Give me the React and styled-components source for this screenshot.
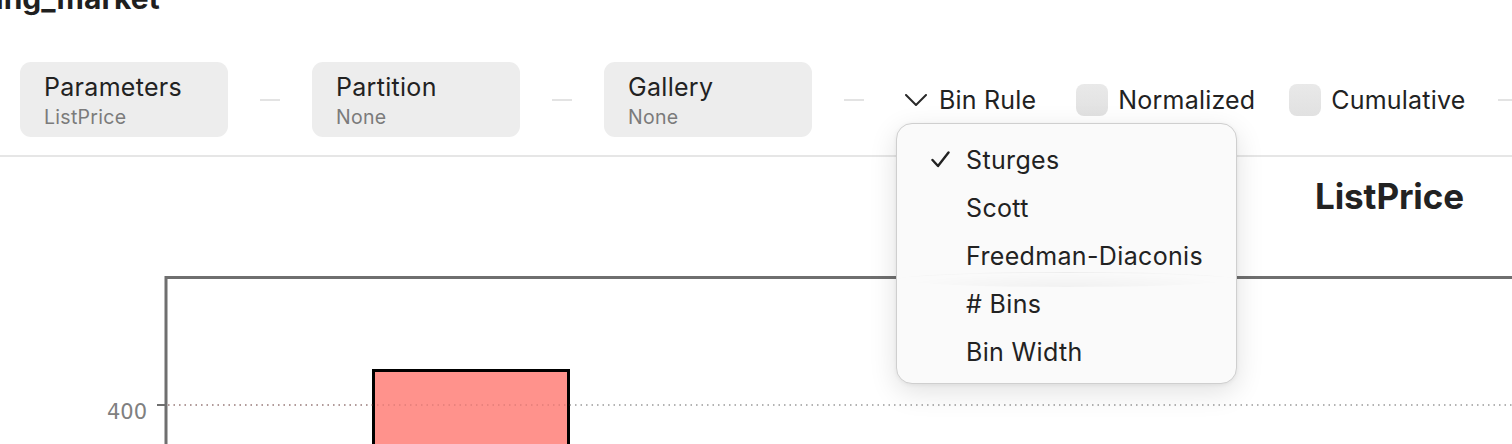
import React from "react";
import styled, { createGlobalStyle } from "styled-components";

const Global = createGlobalStyle`
  html, body { margin: 0; padding: 0; background: #fff; }
  body { font-family: Inter, "Noto Sans", sans-serif; color: #222; overflow: hidden; width: 1512px; height: 444px; }
  * { box-sizing: border-box; }
`;

const Page = styled.div`
  width: 1512px;
  height: 444px;
  overflow: hidden;
  display: flex;
  flex-direction: column;
`;

const TitleBar = styled.div`
  height: 51px;
  overflow: hidden;
  flex: none;
`;

const Title = styled.h1`
  margin: -17px 0 0 -77px;
  font-size: 30px;
  line-height: 30px;
  font-weight: 700;
  color: #1f1f1f;
  white-space: nowrap;
`;

const Toolbar = styled.div`
  display: flex;
  align-items: center;
  gap: 32px;
  padding: 11px 0 18px 20px;
  border-bottom: 2px solid #e6e6e6;
  white-space: nowrap;
  flex: none;
`;

const Pill = styled.div`
  width: 208px;
  height: 75px;
  flex: none;
  border-radius: 11px;
  background: #ededed;
  padding: 11px 24px 0;
  display: flex;
  flex-direction: column;
  gap: 4px;
`;

const PillTitle = styled.div`
  font-size: 25px;
  line-height: 28px;
  letter-spacing: 0.3px;
  color: #222;
`;

const PillValue = styled.div`
  font-size: 19.5px;
  line-height: 24px;
  letter-spacing: 0.3px;
  color: #7b7b7b;
`;

const Dash = styled.div`
  width: 20px;
  height: 2px;
  background: #e3e3e3;
  flex: none;
`;

const Control = styled.div`
  display: flex;
  align-items: center;
  gap: ${(p) => p.$gap || 10}px;
  margin-left: ${(p) => p.$ml || 0}px;
  font-size: 25px;
  line-height: 30px;
  letter-spacing: 0.2px;
  color: #222;
`;

const Dropdown = styled.div`
  position: relative;
`;

const Box = styled.div`
  width: 32px;
  height: 32px;
  border-radius: 8px;
  background: linear-gradient(#e9e9e9, #e1e1e1);
`;

const Menu = styled.div`
  position: absolute;
  top: calc(100% + 8px);
  left: 0;
  width: 341px;
  height: 261px;
  background: #fafafa;
  border: 1px solid #cfcfcf;
  border-radius: 16px;
  box-shadow: 0 8px 28px rgba(0, 0, 0, 0.12), 0 1px 4px rgba(0, 0, 0, 0.06);
  padding: 12px 0 9px;
  z-index: 10;
  overflow: hidden;
`;

const Item = styled.div`
  height: 48px;
  display: flex;
  align-items: center;
  padding-left: 34px;
  font-size: 25px;
  letter-spacing: 0.35px;
  color: #222;
  position: relative;
  ${(p) =>
    p.$sheen &&
    `
    &::before {
      content: "";
      position: absolute;
      left: 0; right: 0; top: -8px; height: 14px;
      background: radial-gradient(ellipse at 50% 100%, rgba(0,0,0,0.035), rgba(0,0,0,0) 70%);
      border-top: 1px solid rgba(0,0,0,0.025);
      border-radius: 50%;
    }
  `}
`;

const CheckSlot = styled.span`
  width: 35px;
  flex: none;
  display: inline-flex;
  align-items: center;
`;

const ChartArea = styled.div`
  flex: 1;
  display: flex;
  flex-direction: column;
`;

const ChartTitle = styled.div`
  align-self: flex-end;
  margin: 19px 48px 0 0;
  height: 64px;
  flex: none;
  font-size: 35px;
  line-height: 40px;
  font-weight: 700;
  letter-spacing: -0.1px;
  color: #222;
`;

const Plot = styled.svg`
  display: block;
  flex: none;
`;

const Chevron = () => (
  <svg width="22" height="12" viewBox="0 0 22 12">
    <polyline points="1,1 11,11 21,1" fill="none" stroke="#2a2a2a" strokeWidth="2" strokeLinecap="round" strokeLinejoin="round" />
  </svg>
);

const Check = () => (
  <svg width="19" height="17" viewBox="0 0 19 17">
    <polyline points="1.5,9 7,15 17.5,1.5" fill="none" stroke="#222" strokeWidth="2.4" strokeLinecap="round" strokeLinejoin="round" />
  </svg>
);

const pills = [
  { t: "Parameters", v: "ListPrice" },
  { t: "Partition", v: "None" },
  { t: "Gallery", v: "None" },
];

const rules = ["Sturges", "Scott", "Freedman-Diaconis", "# Bins", "Bin Width"];

export default function App() {
  return (
    <Page>
      <Global />
      <TitleBar>
        <Title>housing_market</Title>
      </TitleBar>
      <Toolbar>
        {pills.map((p) => (
          <React.Fragment key={p.t}>
            <Pill>
              <PillTitle>{p.t}</PillTitle>
              <PillValue>{p.v}</PillValue>
            </Pill>
            <Dash />
          </React.Fragment>
        ))}
        <Dropdown>
          <Control $gap={12} $ml={9}>
            <Chevron />
            <span>Bin Rule</span>
          </Control>
          <Menu>
            {rules.map((r, i) => (
              <Item key={r} $sheen={i === 3}>
                <CheckSlot>{i === 0 && <Check />}</CheckSlot>
                {r}
              </Item>
            ))}
          </Menu>
        </Dropdown>
        <Control $ml={8}>
          <Box />
          <span>Normalized</span>
        </Control>
        <Control $ml={2}>
          <Box />
          <span>Cumulative</span>
        </Control>
        <Dash />
      </Toolbar>
      <ChartArea>
        <ChartTitle>ListPrice</ChartTitle>
        <Plot width="1512" height="210" viewBox="0 0 1512 210">
          <line x1="168" y1="165" x2="1512" y2="165" stroke="#9a9a9a" strokeWidth="1.5" strokeDasharray="1.5 4" />
          <rect x="373.5" y="130.5" width="195" height="120" fill="#ff928c" stroke="#000" strokeWidth="3" />
          <line x1="168" y1="165" x2="570" y2="165" stroke="#b05a55" strokeOpacity="0.35" strokeWidth="1.5" strokeDasharray="1.5 4" />
          <polyline points="166,210 166,37.5 1512,37.5" fill="none" stroke="#6f6f6f" strokeWidth="3" />
          <line x1="157" y1="165" x2="166" y2="165" stroke="#6f6f6f" strokeWidth="2" />
          <text x="147" y="179" textAnchor="end" fontFamily="DejaVu Sans, sans-serif" fontSize="21" fill="#808080">400</text>
        </Plot>
      </ChartArea>
    </Page>
  );
}
